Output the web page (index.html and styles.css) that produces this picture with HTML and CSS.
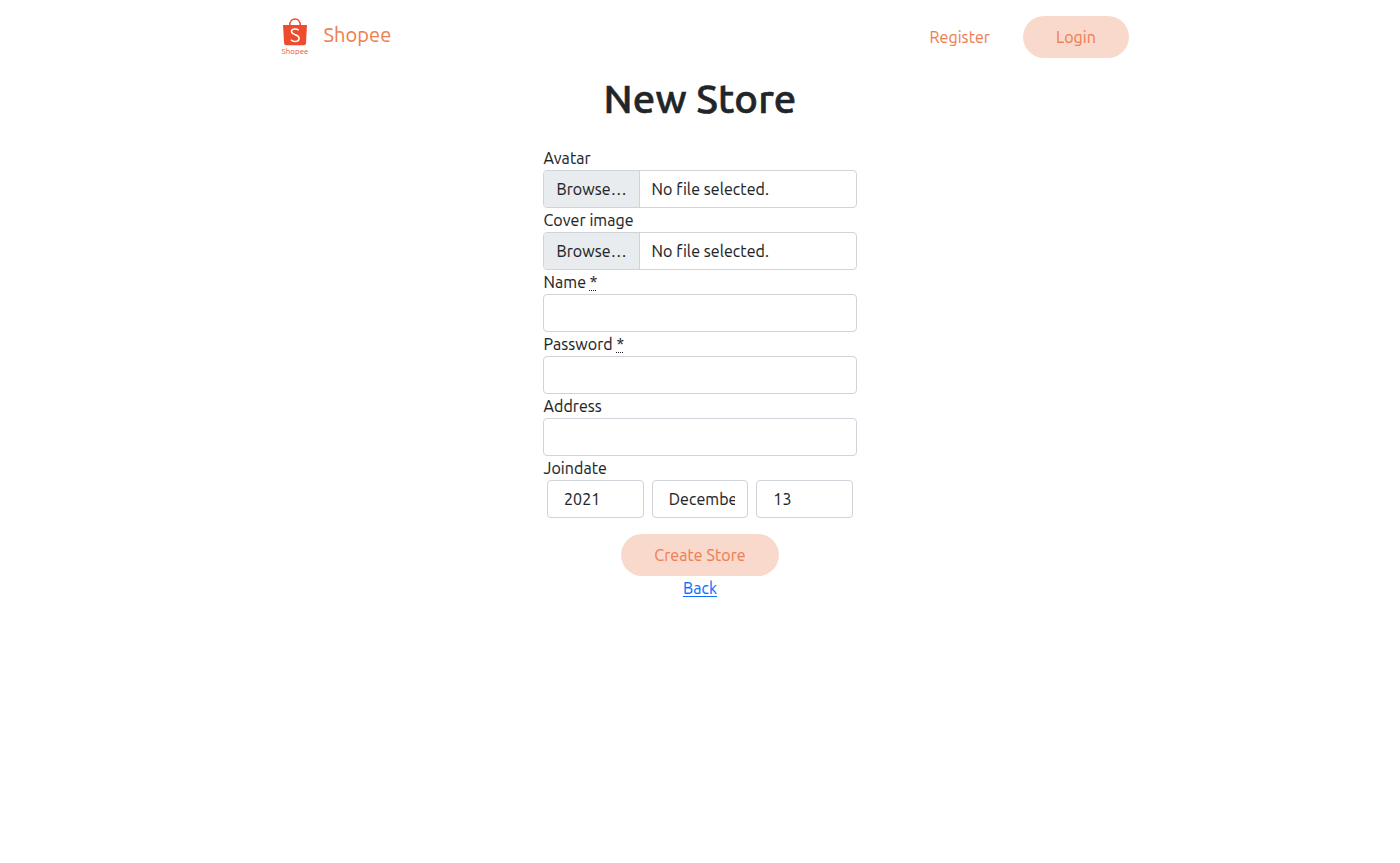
FILE: index.html
```html
<!DOCTYPE html>
<html lang="en">
<head>
<meta charset="utf-8">
<title>New Store</title>
<link rel="stylesheet" href="styles.css">
</head>
<body>
<header class="navbar">
  <a class="brand" href="#">
    <svg class="brand-logo" width="30" height="40" viewBox="0 0 30 40" aria-hidden="true">
      <path d="M9.700 8.500C9.700 4.500 12 2 15 2s5.300 2.500 5.300 6.500" fill="none" stroke="#ee4d2d" stroke-width="1.500"/>
      <path d="M3 8h24l-1 18.300c-.1 1.200-.9 1.900-2 1.900H6.200c-1.200 0-2-.7-2.100-1.900z" fill="#ee4d2d"/>
      <path d="M18.700 13.200c-1.200-.9-2.400-1.300-3.700-1.300-2.100 0-3.500 1.100-3.500 2.700 0 3.900 7.600 2.400 7.600 6.600 0 1.900-1.600 3.200-3.900 3.200-1.700 0-3.200-.6-4.400-1.700" fill="none" stroke="#fff" stroke-width="1.500"/>
      <text class="logo-word" x="1.500" y="36.800" textLength="27">Shopee</text>
    </svg>
    <span class="brand-name">Shopee</span>
  </a>
  <nav class="nav-actions">
    <a class="nav-link" href="#">Register</a>
    <a class="pill pill-login" href="#">Login</a>
  </nav>
</header>
<main class="page">
  <h1 class="title">New Store</h1>
  <form class="form">
    <label class="label">Avatar</label>
    <div class="file"><span class="file-button">Browse…</span><span class="file-name">No file selected.</span></div>
    <label class="label">Cover image</label>
    <div class="file"><span class="file-button">Browse…</span><span class="file-name">No file selected.</span></div>
    <label class="label" for="name">Name <abbr class="required">*</abbr></label>
    <input class="control" id="name" type="text">
    <label class="label" for="password">Password <abbr class="required">*</abbr></label>
    <input class="control" id="password" type="password">
    <label class="label" for="address">Address</label>
    <input class="control" id="address" type="text">
    <label class="label">Joindate</label>
    <div class="dates">
      <select class="control date"><option>2021</option></select>
      <select class="control date"><option>December</option></select>
      <select class="control date"><option>13</option></select>
    </div>
    <button class="pill pill-create" type="button">Create Store</button>
  </form>
  <a class="back" href="#">Back</a>
</main>
</body>
</html>
```
FILE: styles.css
```css
*, *::before, *::after { box-sizing: border-box; }
body {
  margin: 0;
  background: #fff;
  color: #212529;
  font: 400 16px/24px Ubuntu, "Noto Sans", sans-serif;
  letter-spacing: 0.07px;
  -webkit-text-stroke: 0.1px;
}
a { text-decoration: none; }
.navbar {
  width: 858px;
  height: 74px;
  margin: 0 auto;
  padding: 0 0 0 9px;
  display: flex;
  align-items: center;
  justify-content: space-between;
}
.brand { display: flex; align-items: center; gap: 13.5px; color: #ee7f52; }
.brand-logo { display: block; }
.logo-word { font: 8px Ubuntu, "Noto Sans", sans-serif; letter-spacing: 0; fill: #ee4d2d; -webkit-text-stroke: 0; }
.brand-name { font-size: 20px; line-height: 30px; padding-bottom: 4px; }
.nav-actions { display: flex; align-items: center; gap: 33px; }
.nav-link { color: #ee7f52; }
.pill {
  display: flex;
  align-items: center;
  justify-content: center;
  height: 42px;
  padding: 0;
  border: 0;
  border-radius: 21px;
  background: #fad9cd;
  color: #ee7f52;
  font: inherit;
  letter-spacing: inherit;
}
.pill-login { width: 106px; }
.pill-create { width: 158px; margin: 16px auto 0; }
.page { display: flex; flex-direction: column; align-items: center; }
.title { margin: 1px 0 23px; font-size: 40px; line-height: 48px; font-weight: 500; letter-spacing: 0.15px; -webkit-text-stroke: 0.6px; }
.form { display: flex; flex-direction: column; width: 314px; }
.label { height: 24px; padding-left: 0.5px; white-space: nowrap; }
.required { text-decoration: underline dotted 1px; text-underline-offset: 2px; }
.file {
  display: flex;
  height: 38px;
  border: 1px solid #ced4da;
  border-radius: 4px;
  overflow: hidden;
  line-height: 36px;
}
.file-button { width: 96px; padding-left: 12.5px; background: #e9ecef; border-right: 1px solid #ced4da; }
.file-name { padding-left: 11.5px; }
.control {
  width: 100%;
  height: 38px;
  padding: 6px 12px;
  border: 1px solid #ced4da;
  border-radius: 4px;
  background: #fff;
  color: #212529;
  font: inherit;
  letter-spacing: inherit;
  appearance: none;
}
.dates { display: flex; gap: 8px; padding: 0 4px; }
.date { flex: 1 1 0; min-width: 0; padding-left: 16px; }
.back { color: #0d6efd; text-decoration: underline 1px; text-underline-offset: 2px; }
```
